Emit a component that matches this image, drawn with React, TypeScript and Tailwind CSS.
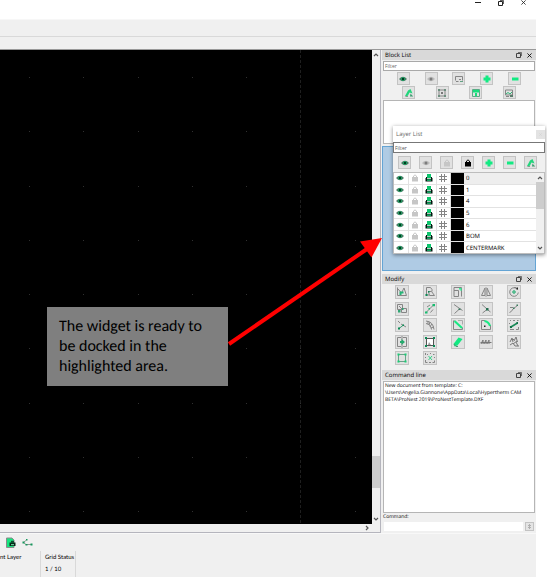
import React, { useState } from "react";

type Stroke = { d: string; c?: string; w?: number; fill?: boolean };

const DARK = "#0b8a55";
const GREY = "#858585";

function Glyph({ strokes, className = "" }: { strokes: Stroke[]; className?: string }) {
  return (
    <svg viewBox="0 0 12 12" className={`block size-3 shrink-0 ${className}`} fill="none" aria-hidden="true">
      {strokes.map((s, i) => (
        <path
          key={i}
          d={s.d}
          fill={s.fill ? (s.c ?? GREY) : "none"}
          stroke={s.fill ? "none" : (s.c ?? GREY)}
          strokeWidth={s.w ?? 1}
        />
      ))}
    </svg>
  );
}

const EYE_D = "M2 6Q6 1.500 10 6Q6 10.500 2 6Z";
const icons = {
  eye: [
    { d: EYE_D, c: "#4c7a65", fill: true },
    { d: "M4.200 6a1.800 1.800 0 1 0 3.600 0a1.800 1.800 0 1 0-3.600 0", c: "#02b25f", fill: true },
    { d: "M5 5h2v2H5z", c: "#013a20", fill: true },
  ],
  eyeOff: [
    { d: EYE_D, c: "#bcbcbc", fill: true },
    { d: "M4.500 6a1.500 1.500 0 1 0 3 0a1.500 1.500 0 1 0-3 0", c: "#7c7c7c", fill: true },
  ],
  plus: [{ d: "M4.500 2.500h3v2h2v3h-2v2h-3v-2h-2v-3h2z", c: "#12ea82", fill: true }],
  minus: [{ d: "M3 4.500h6.500v3H3z", c: "#12ea82", fill: true }],
  edit: [
    { d: "M2 9L5 3.500L7.500 2L9.500 6.500L6.500 5.500L5 8.500L3.500 9.500Z", c: "#22d67c", fill: true },
    { d: "M7.500 6.500l2.700 3H7z", c: "#3d9b70", fill: true },
    { d: "M2.500 9.500h2.500", c: "#8a9a92" },
  ],
  insert: [
    { d: "M2.500 7.500V3.500h7v4M3 8.500h2.500M6 6.500h2" },
    { d: "M7 8h3v1H7z", c: "#63a183", fill: true },
  ],
  attrs: [
    { d: "M3 3h6v6H3z" },
    { d: "M2 2h2v2H2zM8 2h2v2H8zM2 8h2v2H2zM8 8h2v2H8z", c: "#6d8f7f", fill: true },
    { d: "M5 6h2", c: "#111" },
  ],
  save: [
    { d: "M2.500 2.500h7v7h-7z", c: "#58ac85" },
    { d: "M3 3h6v2.500H3zM5 6h2v3H5z", c: "#17df7c", fill: true },
  ],
  picture: [
    { d: "M2.500 3h7v5h-7zM3 9.500h3" },
    { d: "M3 7L5 5.500L7 7L9 5", c: "#2cb375" },
    { d: "M7 8h3v2H7z", c: "#5c7c6c", fill: true },
  ],
  lockOff: [
    { d: "M3 5h6v4.500H3z", c: "#c6c6c6", fill: true },
    { d: "M4.500 5.500V4Q6 1.800 7.500 4v1.500", c: "#c6c6c6" },
  ],
  lock: [
    { d: "M3 5h6v4.500H3z", c: "#000", fill: true },
    { d: "M4.500 5.500V4Q6 1.800 7.500 4v1.500", c: "#000" },
  ],
  printer: [
    { d: "M4 2h4v4H4z", c: "#0cc56c", fill: true },
    { d: "M2.500 6h1.500v.8h4V6h1.500v3.500h-7z", c: "#03180f", fill: true },
    { d: "M3 5h1v2H3zM8 5h1v2H8z", c: "#03180f", fill: true },
    { d: "M4 7.500h4v1.200H4z", c: "#1fdd86", fill: true },
  ],
  hash: [{ d: "M4.500 2v8M7.500 2v8M2 4.500h8M2 7.500h8", c: "#858585" }],
} satisfies Record<string, Stroke[]>;

const modifyTools: { name: string; strokes: Stroke[] }[] = [
  { name: "Move", strokes: [
    { d: "M1.500 1.500V9.500H10.500L8 2L5.500 7L2 3" },
    { d: "M3.500 5.500h4v2h-2v1.500h-2z", c: "#22b576", fill: true } ] },
  { name: "Copy", strokes: [
    { d: "M2.500 9V1.500h4l1.500 2v2M2.500 9H5M4.500 5.500h3L10.500 9.500H5.500z" },
    { d: "M1.500 8h2v2h-2zM4 5h1.500v1.500H4z", c: DARK, fill: true } ] },
  { name: "Scale", strokes: [
    { d: "M2 1.500h7.500v9M2 4.500h4.500v6H2zM2 1.500v3" },
    { d: "M7 2h2.500v3h-1V3.500H7z", c: "#2ff093", fill: true } ] },
  { name: "Mirror", strokes: [
    { d: "M5 2L1.500 9.500H5zM7 2l3.500 7.500H7z" }, { d: "M6 1v10", c: "#a3a3a3" } ] },
  { name: "Rotate", strokes: [
    { d: "M9.500 3.500A4.300 4.300 0 1 0 10.300 6.500M6 1.500h2" },
    { d: "M6 4v4M4 6h4", c: "#4bb889", w: 1.5 },
    { d: "M8.500 1.500h1.500v2H8.500z", c: "#222", fill: true } ] },
  { name: "Move and rotate", strokes: [
    { d: "M1.500 1.500h5v5h-5zM5.500 5.500h5v4h-5zM3 3l3 3" },
    { d: "M2 7h2.500v2.500H2zM6 5h1.500v2H6z", c: "#31a575", fill: true } ] },
  { name: "Stretch", strokes: [
    { d: "M2 9.500L9.500 2M3 4l3-2M6.500 9.500l2.500-3" },
    { d: "M1 8.500h2.500v2H1zM8.500 1H11v2.200H8.500zM4.500 5h1.500v1.500H4.500z", c: "#17bd70", fill: true } ] },
  { name: "Trim", strokes: [
    { d: "M2 1.500l8.500 6M2.500 10.500L7.500 6" }, { d: "M6.500 5.500h2v1.500h-2z", c: "#3c7d62", fill: true } ] },
  { name: "Trim both", strokes: [
    { d: "M2 1.500l5.500 5M2.500 10L7 6.500M8 7l2.500 2" }, { d: "M6 5h2.500v2.500H6z", c: "#277052", fill: true } ] },
  { name: "Lengthen", strokes: [
    { d: "M1.500 9.500Q3.500 9 5 6L9.500 2.500M2 4.500h3" }, { d: "M5 4.500h1.500V6H5zM8.500 1.500H10V3H8.500z", c: "#387a5c", fill: true } ] },
  { name: "Break", strokes: [
    { d: "M2 2l2 2M5 5l5 3" }, { d: "M3 9.500L7.500 6", c: "#3c9e73" },
    { d: "M2 8.500h2v2H2zM6.500 5.500H8V7H6.500z", c: DARK, fill: true } ] },
  { name: "Offset", strokes: [
    { d: "M2 2Q9 2.500 10 10.500M2 4.500Q6.500 5 7.500 10.500M4 2v3.500M6 3L5 6M8 5L6 7.500M9.500 8L7 9" } ] },
  { name: "Bevel", strokes: [
    { d: "M1.500 2V10.500H10.500V8.500M1.500 1.500h1" }, { d: "M6 1.500h4.500v4", c: "#aaa" },
    { d: "M2.500 2L10 9", c: "#17e982", w: 2 } ] },
  { name: "Round", strokes: [
    { d: "M5 1.500H1.500V10.500H10.500V6" }, { d: "M4.500 2Q9 3 10 7", c: "#17e982", w: 2 },
    { d: "M4 6.500h1.500V8H4z", c: "#222", fill: true } ] },
  { name: "Divide", strokes: [
    { d: "M2 1.500h1M5 1.500h2M9 1.500h1.500M1.500 4v1M10.500 8v2.500H8M2 10.500h4" },
    { d: "M2 8.500L9.500 4", c: "#198c59", w: 1.6 }, { d: "M2 7h2v2H2zM8.500 3h1.500v2H8.500z", c: "#147348", fill: true } ] },
  { name: "Stretch area", strokes: [
    { d: "M5 1.500H1.500v9H5M7 1.500h3.500v9H7M6 0v12" },
    { d: "M4 5h1.500V3L9 6L5.500 9V7H4z", c: "#25aa6d", fill: true } ] },
  { name: "Properties", strokes: [
    { d: "M3 3h6v6H3z", c: "#fff", fill: true }, { d: "M2.500 2.500h7v7h-7z", c: "#555" },
    { d: "M5 6l2 3H4z", c: "#999", fill: true },
    { d: "M1 1h2v2H1zM9 1h2v2H9zM1 9h2v2H1zM9 9h2v2H9z", c: DARK, fill: true } ] },
  { name: "Delete", strokes: [
    { d: "M1.500 8L6.500 1.500L10.500 3L5.500 9.500L2.500 10.500Z", c: "#12e982", fill: true },
    { d: "M2 8l2 2.500h2", c: "#559077" } ] },
  { name: "Explode text", strokes: [
    { d: "M1 8l2-4v4M4 8l2-4v4M7 8l2-4v4M0.500 6.500h11", c: "#777" } ] },
  { name: "Edit text", strokes: [
    { d: "M2 6l2-4l1 4M6 5l2-4l1.500 5M2 9l3-2l2 3h4M3 3.500h3M8 6l2 4M5 8l4-3", c: "#777" } ] },
  { name: "Explode", strokes: [
    { d: "M2.500 2.500h7v7h-7z", c: "#6aa389" },
    { d: "M1.500 1.500h2v2h-2zM8.500 1.500h2v2h-2zM1.500 8.500h2v2h-2zM8.500 8.500h2v2h-2z", c: "#19cd76", fill: true } ] },
  { name: "Purge", strokes: [
    { d: "M1.500 1v2M1.500 5v1M1.500 8v2.500h2M5 10.500h2M8.500 10.500h2v-2M10.500 6V5M3 2.500h1M6 1.500h1M9 2.500h1.500" },
    { d: "M4.500 4l3.500 4M8 4L4.500 8", c: "#35d188" } ] },
];

const layers = ["0", "1", "4", "5", "6", "BOM", "CENTERMARK"];

function IconButton({ label, strokes, large }: { label: string; strokes: Stroke[]; large?: boolean }) {
  return (
    <button
      type="button"
      aria-label={label}
      className={`${large ? "size-[14px]" : "size-[13px]"} flex shrink-0 items-center justify-center border border-[#c3c3c3] bg-[#e1e1e1]`}
    >
      <Glyph strokes={strokes} />
    </button>
  );
}

function RestoreIcon() {
  return (
    <svg viewBox="0 0 6 6" className="size-[6px]" fill="none" stroke="currentColor" aria-hidden="true">
      <path d="M0.500 1.500h4v4h-4z" />
      <path d="M2 0.500h3.500V4" strokeOpacity="0.700" />
    </svg>
  );
}

function CloseIcon({ className = "size-[5px]" }: { className?: string }) {
  return (
    <svg viewBox="0 0 6 6" className={className} fill="none" stroke="currentColor" aria-hidden="true">
      <path d="M0.500 0.500l5 5M5.500 0.500l-5 5" />
    </svg>
  );
}

function Chevron({ d }: { d: string }) {
  return (
    <svg viewBox="0 0 6 6" className="size-[6px]" fill="none" stroke="#555" strokeWidth="1.200" aria-hidden="true">
      <path d={d} />
    </svg>
  );
}

function PanelTitle({ children }: { children: string }) {
  return (
    <header className="flex h-[10px] items-center bg-[#d9d9d9] pr-1 pl-[3px] text-black">
      <h2 className="flex-1 text-[6px] leading-[10px]">{children}</h2>
      <button type="button" aria-label={`Float ${children}`} className="mr-[5px] text-[#444]">
        <RestoreIcon />
      </button>
      <button type="button" aria-label={`Close ${children}`}>
        <CloseIcon />
      </button>
    </header>
  );
}

function Viewport() {
  const cols = Array.from({ length: 40 }, (_, i) => 29 + Math.round(i * 54.25));
  const rows = Array.from({ length: 30 }, (_, j) => 27 + Math.round(j * 54.25));
  return (
    <div className="flex min-w-0 flex-1 flex-col border-r border-b border-[#b5b5bd]">
      <div className="flex min-h-0 flex-1">
        <div className="min-w-0 flex-1 overflow-hidden bg-black">
          <svg className="block size-full" aria-label="Drawing">
            {rows.map((y) => cols.map((x) => (
              <rect key={`${x}-${y}`} x={x} y={y} width="1" height="1" fill="#303030" />
            )))}
            <line x1="300.500" x2="300.500" y1="0" y2="100%" stroke="#1e1e1e" strokeDasharray="3 2" />
          </svg>
        </div>
        <div className="flex w-[8px] flex-col items-center justify-between bg-[#f0f0f0] py-[2px]">
          <Chevron d="M1 4l2-2l2 2" />
          <div className="mt-auto mb-[28px] h-[32px] w-full bg-[#cdcdcd]" />
          <Chevron d="M1 2l2 2l2-2" />
        </div>
      </div>
      <div className="flex h-[8px] items-center justify-end bg-[#f0f0f0] pr-[10px]">
        <Chevron d="M2 1l2 2l-2 2" />
      </div>
    </div>
  );
}

function LayerList() {
  const [filter, setFilter] = useState("");
  return (
    <section
      aria-label="Layer List"
      className="absolute top-[76px] left-[11px] w-[152px] bg-white shadow-[0_1px_4px_rgba(0,0,0,0.45)]"
    >
      <header className="flex h-4 items-center pl-[3px]">
        <h2 className="flex-1 text-[6px] text-[#666]">Layer List</h2>
        <button type="button" aria-label="Close Layer List" className="flex size-[9px] items-center justify-center bg-[#e3e3e3] text-[#cfcfcf]">
          <CloseIcon className="size-[3px]" />
        </button>
      </header>
      <input
        aria-label="Filter layers"
        placeholder="Filter"
        value={filter}
        onChange={(e) => setFilter(e.target.value)}
        className="block h-[11px] w-full border border-[#777] bg-white px-px text-[5px] placeholder:text-[#555]"
      />
      <div className="flex gap-2 bg-[#f0f0f0] py-[3px] pl-[5px]">
        <IconButton label="Show all layers" strokes={icons.eye} />
        <IconButton label="Hide all layers" strokes={icons.eyeOff} />
        <IconButton label="Unlock all layers" strokes={icons.lockOff} />
        <IconButton label="Lock all layers" strokes={icons.lock} />
        <IconButton label="Add layer" strokes={icons.plus} />
        <IconButton label="Remove layer" strokes={icons.minus} />
        <IconButton label="Edit layer" strokes={icons.edit} />
      </div>
      <div className="flex h-[82px] border border-[#bdbdbd]">
        <table className="h-[80px] flex-1 table-fixed border-collapse">
          <tbody>
            {layers.filter((l) => l.toLowerCase().includes(filter.toLowerCase())).map((name, i) => (
              <tr key={name} className={i === 0 ? "bg-[#eeeeee]" : "border-t border-[#e2e2e2] bg-white"}>
                {[icons.eye, icons.lockOff, icons.printer, icons.hash].map((s, k) => (
                  <td key={k} className="w-[14px] border-r border-[#e2e2e2] bg-white p-0">
                    <Glyph strokes={s} className="-my-px" />
                  </td>
                ))}
                <td className="w-[14px] bg-black p-0" />
                <td className="p-0 pl-[2px] text-[6px] leading-[10px] text-black">{name}</td>
              </tr>
            ))}
          </tbody>
        </table>
        <div className="flex w-[8px] flex-col items-center bg-[#f0f0f0] py-[2px]">
          <Chevron d="M1 4l2-2l2 2" />
          <div className="mt-px mb-auto h-[27px] w-full bg-[#cdcdcd]" />
          <Chevron d="M1 2l2 2l2-2" />
        </div>
      </div>
    </section>
  );
}

function Sidebar() {
  return (
    <aside className="relative ml-px flex w-[154px] shrink-0 flex-col gap-px bg-[#f0f0f0]">
      <section aria-label="Block List" className="flex flex-col gap-px">
        <PanelTitle>Block List</PanelTitle>
        <input
          aria-label="Filter blocks"
          placeholder="Filter"
          className="mx-px block h-[10px] border border-[#a9a9a9] bg-white px-px text-[5px] placeholder:text-[#666]"
        />
        <div className="flex justify-evenly">
          <IconButton label="Show all blocks" strokes={icons.eye} />
          <IconButton label="Hide all blocks" strokes={icons.eyeOff} />
          <IconButton label="Insert block" strokes={icons.insert} />
          <IconButton label="Add block" strokes={icons.plus} />
          <IconButton label="Remove block" strokes={icons.minus} />
        </div>
        <div className="flex justify-evenly">
          <IconButton label="Rename block" strokes={icons.edit} />
          <IconButton label="Edit block" strokes={icons.attrs} />
          <IconButton label="Save block" strokes={icons.save} />
          <IconButton label="Insert picture" strokes={icons.picture} />
        </div>
        <div className="mx-px h-[44px] border border-[#b5b5b5] bg-white" />
      </section>
      <div className="mt-px h-[125px] border border-[#64a4d4] bg-[#afcbe4]" />
      <section aria-label="Modify" className="mt-[2px]">
        <PanelTitle>Modify</PanelTitle>
        <div className="mt-px grid h-[80px] grid-cols-[repeat(5,14px)] content-between gap-x-[14px] pl-[13px]">
          {modifyTools.map((t) => (
            <IconButton key={t.name} label={t.name} strokes={t.strokes} large />
          ))}
        </div>
      </section>
      <section aria-label="Command line" className="mt-1 flex min-h-0 flex-1 flex-col">
        <PanelTitle>Command line</PanelTitle>
        <div className="mx-px mt-px flex-1 border border-[#b5b5b5] bg-white p-px text-[5px] leading-[7px] text-black">
          New document from template: C:<br />
          \Users\Angelia.Giannone\AppData\Local\Hypertherm CAM<br />
          BETA\ProNest 2019\ProNestTemplate.DXF
        </div>
        <label htmlFor="command" className="pl-px text-[5px] leading-[9px] text-black">Command:</label>
        <div className="flex items-center gap-[2px] pr-[2px] pb-[2px] pl-[2px]">
          <input id="command" className="h-[9px] min-w-0 flex-1 bg-white px-px text-[5px]" />
          <button type="button" aria-label="Command options" className="size-[9px] border border-[#c3c3c3] bg-[#e4e4e4]">
            <svg viewBox="0 0 7 7" className="size-[7px]" fill="none" stroke="#b0b0b0" aria-hidden="true">
              <path d="M2 2.500h3M2 4.500h3M3.500 1v5" />
            </svg>
          </button>
        </div>
      </section>
      <LayerList />
    </aside>
  );
}

function StatusBar() {
  return (
    <footer className="h-[44px] shrink-0 overflow-hidden border-t border-[#f8f8f8] bg-[#f0f0f0] font-['Lato',sans-serif] text-[6px] text-black">
      <div className="flex h-[17px] items-center gap-[6px] pl-[6px]">
        <svg viewBox="0 0 10 11" className="h-[11px] w-[10px]" aria-hidden="true">
          <path d="M0.500 1H6l2 2v7.500H0.500z" fill="#17e57f" stroke="#8a8a8a" />
          <path d="M3.500 5.500h6V9h-6z" fill="#062818" />
          <path d="M5 3.800h3v2H5z" fill="#0e4a2e" />
          <path d="M5 7.200h3v1H5z" fill="#7ef0b8" />
        </svg>
        <svg viewBox="0 0 11 8" className="h-2 w-[11px]" fill="none" aria-hidden="true">
          <path d="M4.500 1L1.500 3.500L4 5.500h5" stroke="#8a9a92" />
          <path d="M0.500 2.500h2v2h-2zM3.500 5h2v1.500h-2zM8.500 4.500h2v2h-2zM4 0h1.500v1.500H4z" fill="#16975d" />
        </svg>
      </div>
      <dl className="flex h-[26px]">
        <div className="w-[41px] border-r border-[#d9d9d9] whitespace-nowrap">
          <dt className="leading-[14px]">nt Layer</dt>
        </div>
        <div className="w-[35px] border-r border-[#d9d9d9] pl-[4px] whitespace-nowrap">
          <dt className="leading-[14px]">Grid Status</dt>
          <dd className="leading-[10px]">1 / 10</dd>
        </div>
      </dl>
    </footer>
  );
}

export default function App() {
  return (
    <div className="flex h-screen min-h-[480px] flex-col overflow-hidden bg-white font-['Open_Sans','Noto_Sans',sans-serif] [text-rendering:geometricPrecision]">
      <header className="flex h-[19px] shrink-0 items-start justify-end gap-[17px] pr-[21px] text-[#222]">
        <button type="button" aria-label="Minimize" className="pt-[2px]">
          <svg viewBox="0 0 6 1" className="h-px w-[6px]" aria-hidden="true"><path d="M0 0h6v1H0z" fill="currentColor" /></svg>
        </button>
        <button type="button" aria-label="Restore"><RestoreIcon /></button>
        <button type="button" aria-label="Close"><CloseIcon /></button>
      </header>
      <div className="mr-[11px] flex min-h-0 flex-1 flex-col bg-[#f0f0f0]">
        <div className="h-[18px] shrink-0 border-t border-b border-t-[#f7f7f7] border-b-[#d9d9d9]" />
        <div className="h-[13px] shrink-0 border-b border-[#999]" />
        <main className="relative flex min-h-0 flex-1">
          <Viewport />
          <Sidebar />
          <p className="absolute top-[257px] right-[308px] h-[79px] w-[181px] bg-[#7f7f7f] pt-[10px] pl-3 font-['Carlito','Lato',sans-serif] text-[16px] leading-[20px] text-black">
            The widget is ready to<br />be docked in the<br />highlighted area.
          </p>
          <svg viewBox="0 0 156 110" className="absolute top-[187px] right-[153px] h-[110px] w-[156px]" aria-hidden="true">
            <path d="M2 107L140 12" stroke="#f00" strokeWidth="4" />
            <path d="M155 1L133 4.500L144.500 20.500Z" fill="#f00" />
          </svg>
        </main>
        <StatusBar />
      </div>
    </div>
  );
}
